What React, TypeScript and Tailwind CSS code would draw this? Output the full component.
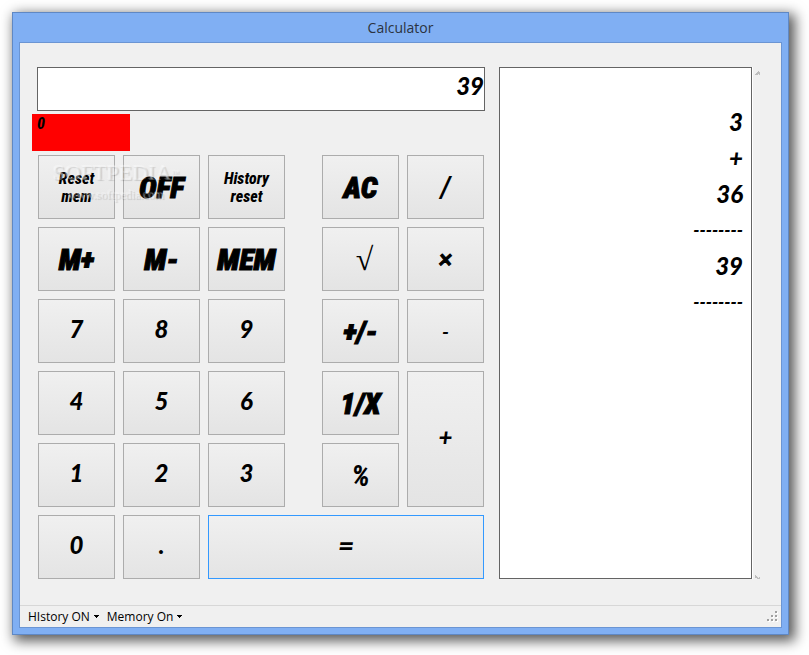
import { useState } from "react";

interface Key {
  label: string;
  style: string;
  area?: string;
}

// button captions come in a heavy narrow face or in the rounder digit face
const HEAVY =
  "font-['Roboto_Condensed','Roboto',sans-serif] text-[30px] leading-8 font-black italic pt-[2px] [-webkit-text-stroke:1px_black]";
const HEAVY_SMALL =
  "font-['Roboto_Condensed','Roboto',sans-serif] text-base leading-[18px] font-extrabold italic pt-[2px]";
const DIGIT = "font-['Lato',sans-serif] text-2xl leading-8 font-black italic pb-1";

const keys: Key[] = [
  { label: "Reset mem", style: HEAVY_SMALL, area: "px-4" },
  { label: "OFF", style: HEAVY },
  { label: "History reset", style: HEAVY_SMALL, area: "px-3" },
  { label: "AC", style: HEAVY, area: "col-start-5" },
  { label: "/", style: "font-['Roboto_Condensed','Roboto',sans-serif] text-[30px] leading-8 font-semibold italic" },
  { label: "M+", style: HEAVY },
  { label: "M-", style: HEAVY },
  { label: "MEM", style: HEAVY },
  { label: "√", style: "font-['Liberation_Serif',serif] text-[32px] leading-8 italic pl-2", area: "col-start-5" },
  { label: "×", style: "font-['Lato',sans-serif] text-2xl leading-8 font-black italic [-webkit-text-stroke:1px_black]" },
  { label: "7", style: DIGIT },
  { label: "8", style: DIGIT },
  { label: "9", style: DIGIT },
  { label: "+/-", style: HEAVY, area: "col-start-5" },
  { label: "-", style: "font-['Lato',sans-serif] text-xl leading-8 font-bold italic" },
  { label: "4", style: DIGIT },
  { label: "5", style: DIGIT },
  { label: "6", style: DIGIT },
  { label: "1/X", style: HEAVY, area: "col-start-5" },
  { label: "+", style: DIGIT, area: "row-span-2" },
  { label: "1", style: DIGIT },
  { label: "2", style: DIGIT },
  { label: "3", style: DIGIT },
  { label: "%", style: "font-['Roboto_Condensed','Roboto',sans-serif] text-[30px] leading-8 font-bold italic pt-[2px]", area: "col-start-5" },
  { label: "0", style: DIGIT },
  { label: ".", style: DIGIT },
  { label: "=", style: "font-['Lato',sans-serif] text-[28px] leading-8 font-black italic pb-1", area: "col-span-4" },
];

const history = ["3", "+", "36", "--------", "39", "--------"];

function StatusMenu({ label }: { label: string }) {
  return (
    <button type="button" className="flex items-center gap-1">
      {label}
      <svg width="5" height="3" viewBox="0 0 5 3" shapeRendering="crispEdges" aria-hidden="true">
        <path d="M0 0h5v1h-1v1h-1v1h-1v-1h-1v-1h-1z" fill="#000" />
      </svg>
    </button>
  );
}

function Keypad() {
  return (
    <div className="relative mt-1 grid auto-rows-[64px] grid-cols-[minmax(0,1fr)_minmax(0,1fr)_minmax(0,1fr)_21px_minmax(0,1fr)_minmax(0,1fr)] gap-2 px-px">
      {keys.map((key) => (
        <button
          key={key.label}
          type="button"
          className={`flex items-center justify-center border bg-linear-to-b from-[#f0f0f0] to-[#e4e4e4] text-center ${
            key.label === "=" ? "border-[#3399ff]" : "border-[#acacac]"
          } ${key.style} ${key.area ?? ""}`}
        >
          {key.label}
        </button>
      ))}
      <div className="pointer-events-none absolute top-1 left-4 text-center font-['Liberation_Serif',serif] text-white/30 [text-shadow:1px_1px_1px_rgb(0_0_0/0.15),-1px_-1px_1px_rgb(255_255_255/0.4)]">
        <p className="text-[22px] leading-7">
          SOFTPEDIA<sup className="text-[8px]">™</sup>
        </p>
        <p className="text-xs leading-4">www.softpedia.com</p>
      </div>
    </div>
  );
}

export default function App() {
  const [display, setDisplay] = useState("39");

  return (
    <div className="bg-white pt-3 pr-5 pb-5 pl-3 text-black">
      <div className="border border-[#5f88c4] bg-[#80aff3] px-[6px] pb-[6px] shadow-[4px_4px_12px_2px_rgb(0_0_0/0.65)]">
        <h1 className="py-1 text-center font-['Open_Sans',sans-serif] text-sm leading-[21px] text-[#2b3340]">
          Calculator
        </h1>
        <div className="border border-[#6b95d3] bg-[#f0f0f0]">
          <main className="grid grid-cols-[minmax(0,448fr)_minmax(0,267fr)_9px] pt-6 pr-5 pb-[26px] pl-[17px]">
            <section>
              <input
                type="text"
                aria-label="Display"
                value={display}
                onChange={(e) => setDisplay(e.target.value)}
                className="block h-11 w-full border border-[#646464] bg-white pb-2 text-right font-['Lato',sans-serif] text-2xl font-black italic outline-none"
              />
              <div className="mt-[3px] -ml-[5px] h-[37px] w-[98px] bg-[#ff0000] px-[5px] py-px font-['Roboto_Condensed','Roboto',sans-serif] text-base leading-[18px] font-extrabold italic">
                0
              </div>
              <Keypad />
            </section>
            <section
              aria-label="History"
              className="ml-[14px] border border-[#646464] bg-white pt-9 pr-2"
            >
              <ul className="text-right font-['Lato',sans-serif] text-2xl leading-9 font-black italic">
                {history.map((line, i) => (
                  <li key={i} className={line.startsWith("--") ? "h-9 text-lg leading-9" : "h-9"}>
                    {line}
                  </li>
                ))}
              </ul>
            </section>
            {/* squashed scrollbar, only the arrow tips remain */}
            <div className="flex flex-col items-end justify-between border-l border-white pt-1">
              <svg width="6" height="4" viewBox="0 0 6 4" shapeRendering="crispEdges" aria-hidden="true">
                <path d="M3 0h1v1h1v3h-1v-1h-1v1h-3v-1h1v-1h1v-1h1z" fill="#bdbdbd" />
              </svg>
              <svg width="6" height="4" viewBox="0 0 6 4" shapeRendering="crispEdges" aria-hidden="true">
                <path d="M0 0h1v1h1v1h1v1h1v-1h1v2h-3v-1h-2z" fill="#bdbdbd" />
              </svg>
            </div>
          </main>
          <footer className="flex h-[22px] items-center gap-2 border-t border-[#d7d7d7] pr-[3px] pl-2 font-['Open_Sans',sans-serif] text-xs">
            <StatusMenu label="HIstory ON" />
            <StatusMenu label="Memory On" />
            <svg className="ml-auto" width="11" height="11" viewBox="0 0 11 11" shapeRendering="crispEdges" aria-hidden="true">
              <path d="M9 1h2v2h-2zM5 5h2v2h-2zM9 5h2v2h-2zM1 9h2v2h-2zM5 9h2v2h-2zM9 9h2v2h-2z" fill="#fff" />
              <path d="M8 0h2v2h-2zM4 4h2v2h-2zM8 4h2v2h-2zM0 8h2v2h-2zM4 8h2v2h-2zM8 8h2v2h-2z" fill="#a0a0a0" />
            </svg>
          </footer>
        </div>
      </div>
    </div>
  );
}
